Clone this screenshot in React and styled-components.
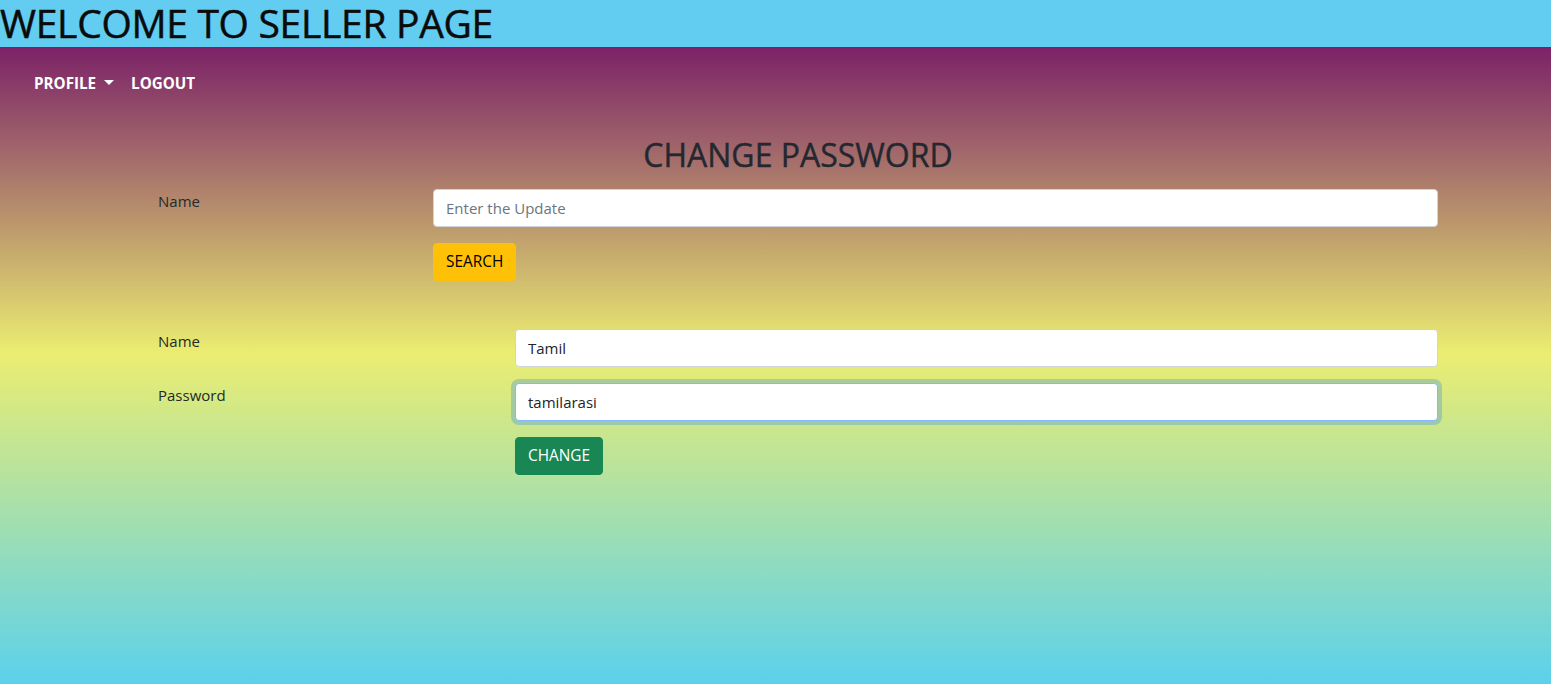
import React from "react";
import styled, { createGlobalStyle } from "styled-components";

const Global = createGlobalStyle`
  html, body { margin: 0; padding: 0; }
  body {
    font-family: "Open Sans", "Noto Sans", sans-serif;
    color: #212529;
    background: #5bd1ec;
  }
  * { box-sizing: border-box; }
`;

const Page = styled.div`
  display: flex;
  flex-direction: column;
  min-height: 684px;
`;

const TopBar = styled.header`
  background: #62cdf0;
  height: 47px;
`;

const Title = styled.h1`
  margin: 0;
  font-size: 39px;
  font-weight: 400;
  line-height: 46px;
  color: #0b0b0b;
  letter-spacing: -0.3px;
  -webkit-text-stroke: 0.5px #0b0b0b;
`;

const Body = styled.main`
  flex: 1;
  background: linear-gradient(to bottom, #7b2267 0%, #ebed71 48%, #5bd1ec 100%);
`;

const NavBar = styled.nav`
  display: flex;
  align-items: center;
  gap: 17px;
  padding: 24px 34px;
`;

const NavLink = styled.a`
  color: #ffffff;
  font-weight: 700;
  font-size: 15.2px;
  line-height: 24px;
  text-transform: uppercase;
  display: inline-flex;
  align-items: center;
  text-decoration: none;
  cursor: pointer;
`;

const Caret = styled.span`
  display: inline-block;
  margin-left: 8px;
  width: 0;
  height: 0;
  border-top: 5px solid #ffffff;
  border-left: 5px solid transparent;
  border-right: 5px solid transparent;
  transform: translateY(-1px);
`;

const Content = styled.section`
  margin: 0 113px 0 158px;
`;

const Heading = styled.h2`
  margin: 17px 0 15px;
  text-align: center;
  font-size: 32px;
  font-weight: 400;
  line-height: 38px;
  color: #232830;
  -webkit-text-stroke: 0.4px #232830;
`;

const FormRow = styled.div`
  display: grid;
  grid-template-columns: ${(p) => p.$labelWidth}px 1fr;
  margin-top: ${(p) => p.$top || 0}px;
  margin-bottom: 16px;
`;

const Label = styled.label`
  font-size: 15px;
  line-height: 24px;
  color: #1f2a2a;
`;

const Field = styled.div`
  display: flex;
  flex-direction: column;
  align-items: flex-start;
`;

const Input = styled.input`
  width: 100%;
  height: 38px;
  padding: 6px 12px;
  font-family: inherit;
  font-size: 15px;
  color: #212529;
  background: #ffffff;
  border: 1px solid ${(p) => (p.$focused ? "#86b7fe" : "#ced4da")};
  border-radius: 4px;
  outline: none;
  box-shadow: ${(p) => (p.$focused ? "0 0 0 4px rgba(13, 110, 253, 0.25)" : "none")};
  &::placeholder { color: #6c757d; }
`;

const Button = styled.button`
  height: 38px;
  padding: 6px 12px;
  font-family: inherit;
  font-size: 15.4px;
  line-height: 24px;
  border: 1px solid ${(p) => p.$bg};
  border-radius: 4px;
  background: ${(p) => p.$bg};
  color: ${(p) => p.$fg};
  cursor: pointer;
`;

export default function App() {
  return (
    <Page>
      <Global />
      <TopBar>
        <Title>WELCOME TO SELLER PAGE</Title>
      </TopBar>
      <Body>
        <NavBar>
          <NavLink>
            Profile
            <Caret />
          </NavLink>
          <NavLink>Logout</NavLink>
        </NavBar>
        <Content>
          <Heading>CHANGE PASSWORD</Heading>
          <FormRow $labelWidth={275}>
            <Label>Name</Label>
            <Field>
              <Input placeholder="Enter the Update" />
            </Field>
          </FormRow>
          <FormRow $labelWidth={275}>
            <span />
            <Field>
              <Button $bg="#ffc107" $fg="#000000">SEARCH</Button>
            </Field>
          </FormRow>
          <FormRow $labelWidth={357} $top={48}>
            <Label>Name</Label>
            <Field>
              <Input defaultValue="Tamil" />
            </Field>
          </FormRow>
          <FormRow $labelWidth={357}>
            <Label>Password</Label>
            <Field>
              <Input defaultValue="tamilarasi" $focused />
            </Field>
          </FormRow>
          <FormRow $labelWidth={357}>
            <span />
            <Field>
              <Button $bg="#198754" $fg="#ffffff">CHANGE</Button>
            </Field>
          </FormRow>
        </Content>
      </Body>
    </Page>
  );
}
